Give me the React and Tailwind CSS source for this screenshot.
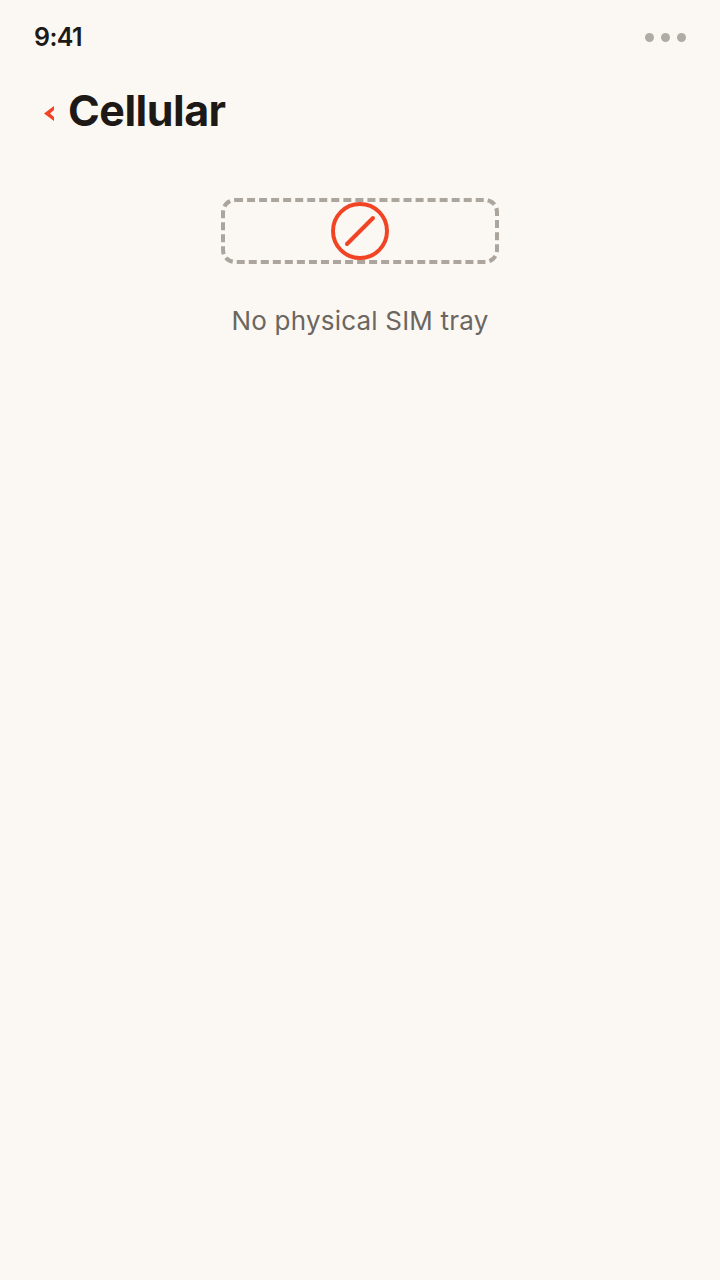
import React from "react";

const StatusBar = () => (
  <div className="flex items-center justify-between pl-[34px] pr-[34px] pt-[22px] h-[52px]">
    <span className="text-[25px] leading-[30px] font-semibold tracking-[-0.6px] text-[#1c1916]">9:41</span>
    <div className="flex items-center gap-[7px]">
      <span className="w-[9px] h-[9px] rounded-full bg-[#b0aba4]" />
      <span className="w-[9px] h-[9px] rounded-full bg-[#b0aba4]" />
      <span className="w-[9px] h-[9px] rounded-full bg-[#b0aba4]" />
    </div>
  </div>
);

const NoSimIcon = () => (
  <svg width="58" height="58" viewBox="0 0 58 58" fill="none">
    <circle cx="29" cy="29" r="27" stroke="#f04424" strokeWidth="4" fill="#fbf8f3" />
    <line x1="16" y1="42" x2="42" y2="16" stroke="#f04424" strokeWidth="4" strokeLinecap="round" />
  </svg>
);

export default function App() {
  return (
    <div className="w-[720px] h-[1280px] bg-[#fbf8f3] font-['Inter',sans-serif] overflow-hidden">
      <StatusBar />

      <div className="flex items-center pl-[44px] pt-[32px] h-[84px]">
        <svg width="10" height="15" viewBox="0 0 10 15" className="mr-[14px] mt-[6px]">
          <path d="M10 0 L0 7.5 L10 15 L10 11 L6 7.5 L10 4 Z" fill="#f04424" />
        </svg>
        <h1 className="text-[43px] leading-[52px] font-bold tracking-[-0.5px] text-[#1c1916]">Cellular</h1>
      </div>

      <div className="flex flex-col items-center pt-[62px]">
        <div className="w-[278px] h-[66px] rounded-[14px] border-[4px] border-dashed border-[#aba59d] flex items-center justify-center">
          <NoSimIcon />
        </div>
        <p className="mt-[39px] text-[26px] leading-[36px] tracking-[0.2px] text-[#6b665f]">No physical SIM tray</p>
      </div>
    </div>
  );
}
